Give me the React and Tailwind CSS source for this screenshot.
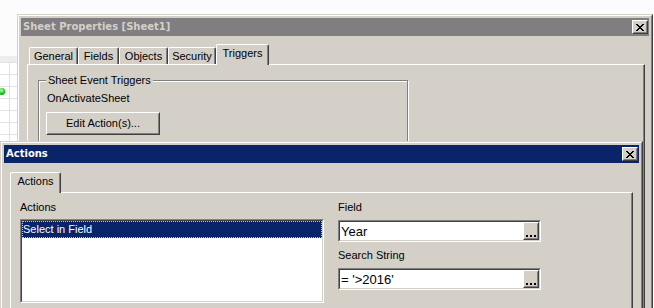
import React from 'react';

const SHEET_TABS = [
  { label: 'General', w: 'w-[49px]' },
  { label: 'Fields', w: 'w-[41px]' },
  { label: 'Objects', w: 'w-[49px]' },
  { label: 'Security', w: 'w-[48px]' },
];

// classic 8x7 close glyph
const CloseGlyph = () => {
  const rows = ['11000011', '01100110', '00111100', '00011000', '00111100', '01100110', '11000011'];
  return (
    <svg width="8" height="7" viewBox="0 0 8 7" shapeRendering="crispEdges">
      {rows.map((row, y) =>
        row.split('').map((c, x) => (c === '1' ? <rect key={`${x}-${y}`} x={x} y={y} width="1" height="1" fill="#000" /> : null))
      )}
    </svg>
  );
};

const Raised = ({ className = '', innerClassName = '', children }) => (
  <div className={`border border-t-white border-l-white border-r-[#404040] border-b-[#404040] ${className}`}>
    <div className={`h-full w-full border border-t-[#d4d0c8] border-l-[#d4d0c8] border-r-[#808080] border-b-[#808080] bg-[#d4d0c8] ${innerClassName}`}>
      {children}
    </div>
  </div>
);

const Sunken = ({ className = '', innerClassName = '', children }) => (
  <div className={`border border-t-[#808080] border-l-[#808080] border-r-white border-b-white ${className}`}>
    <div className={`h-full w-full border border-t-[#404040] border-l-[#404040] border-r-[#d4d0c8] border-b-[#d4d0c8] bg-white ${innerClassName}`}>
      {children}
    </div>
  </div>
);

const CloseButton = () => (
  <Raised className="h-[14px] w-[16px]" innerClassName="flex items-center justify-center">
    <CloseGlyph />
  </Raised>
);

const Frame = ({ className = '', title, active, children }) => (
  <div className={`absolute border border-t-[#d4d0c8] border-l-[#d4d0c8] border-r-[#404040] border-b-[#404040] bg-[#d4d0c8] ${className}`}>
    <div className="h-full w-full border border-t-white border-l-white border-r-[#808080] border-b-[#808080] p-[2px]">
      <div
        className={`flex h-[18px] items-center justify-between pl-[2px] pr-[1px] ${active ? 'bg-[#0a246a]' : 'bg-[#807e80]'}`}
      >
        <span
          className={`font-['DejaVu_Sans',sans-serif] text-[10px] font-bold leading-[12px] ${active ? 'text-white' : 'text-[#d4d0c8]'}`}
        >
          {title}
        </span>
        <CloseButton />
      </div>
      {children}
    </div>
  </div>
);

const Tab = ({ label, w, selected }) => (
  <div
    className={`flex items-center justify-center rounded-tl-[2px] rounded-tr-[2px] border-l border-t border-r border-l-white border-t-white border-r-[#404040] shadow-[inset_-1px_0_0_#808080] bg-[#d4d0c8] ${w} ${
      selected ? 'relative z-10 -mb-px h-[21px] pb-[3px]' : 'h-[17px] pt-[1px]'
    }`}
  >
    {label}
  </div>
);

const Panel = ({ className = '', children }) => (
  <div
    className={`border-l border-t border-r border-l-white border-t-white border-r-[#404040] shadow-[inset_-1px_0_0_#808080] bg-[#d4d0c8] ${className}`}
  >
    {children}
  </div>
);

const DotsButton = () => (
  <Raised className="h-[18px] w-[16px]" innerClassName="flex items-end justify-center pb-[1px]">
    <svg width="10" height="2" viewBox="0 0 10 2" shapeRendering="crispEdges">
      <rect x="0" y="0" width="2" height="2" fill="#000" />
      <rect x="4" y="0" width="2" height="2" fill="#000" />
      <rect x="8" y="0" width="2" height="2" fill="#000" />
    </svg>
  </Raised>
);

const TextBox = ({ value }) => (
  <Sunken className="h-[22px] w-[203px]" innerClassName="flex items-center justify-between">
    <span className="pl-[1px] text-[13px] leading-[15px]">{value}</span>
    <DotsButton />
  </Sunken>
);

const Desktop = () => (
  <div className="absolute left-0 top-[56px] h-[252px] w-[17px] bg-white">
    <div className="h-[6px] bg-[#eeedee]" />
    <div className="h-full bg-[linear-gradient(to_right,#e2e2e2_1px,transparent_1px),linear-gradient(to_bottom,#e2e2e2_1px,transparent_1px)] bg-[size:12px_12px] bg-[position:9px_12px]" />
    <div className="absolute left-[-1px] top-[32px] h-[7px] w-[6px] rounded-full bg-[radial-gradient(circle_at_40%_35%,#b8ffb0,#22c022_55%,#0a8a0a)]" />
  </div>
);

export default function App() {
  return (
    <div className="relative h-[308px] w-[654px] overflow-hidden bg-[#fdfcfd] font-['Liberation_Sans',Arial,sans-serif] text-[11px] leading-[13px] text-black">
      <Desktop />

      <Frame className="left-[17px] top-[14px] h-[330px] w-[636px]" title="Sheet Properties [Sheet1]">
        <div className="mt-[8px] flex h-[20px] items-end pl-[8px]">
          {SHEET_TABS.map((t) => (
            <Tab key={t.label} label={t.label} w={t.w} />
          ))}
          <Tab label="Triggers" w="w-[53px]" selected />
        </div>
        <Panel className="ml-[6px] mr-[4px] h-[300px]">
          <div className="relative ml-[10px] mt-[15px] h-[90px] w-[370px] border border-[#808080] pl-[7px] pt-[11px] shadow-[inset_1px_1px_0_#fff,1px_1px_0_#fff]">
            <span className="absolute left-[7px] top-[-7px] bg-[#d4d0c8] px-[2px]">Sheet Event Triggers</span>
            <div className="pl-[1px]">OnActivateSheet</div>
            <Raised className="mt-[7px] h-[23px] w-[114px]" innerClassName="flex items-center justify-center">
              Edit Action(s)...
            </Raised>
          </div>
        </Panel>
      </Frame>

      <Frame className="left-0 top-[141px] h-[200px] w-[643px]" title="Actions" active>
        <div className="mt-[9px] flex h-[20px] items-end pl-[6px]">
          <Tab label="Actions" w="w-[51px]" selected />
        </div>
        <Panel className="ml-[6px] mr-[6px] h-[160px]">
          <div className="flex pl-[9px]">
            <div className="flex flex-col">
              <div className="mt-[8px]">Actions</div>
              <Sunken className="mt-[5px] h-[84px] w-[304px]">
                <div className="flex h-[17px] items-center bg-[#0a246a] pl-[1px] text-white outline outline-1 -outline-offset-1 outline-dotted outline-[#e8c26a]">
                  Select in Field
                </div>
              </Sunken>
            </div>
            <div className="ml-[14px] flex flex-col">
              <div className="mt-[8px]">Field</div>
              <div className="mt-[6px]">
                <TextBox value="Year" />
              </div>
              <div className="mt-[7px]">Search String</div>
              <div className="mt-[6px]">
                <TextBox value="= '>2016'" />
              </div>
            </div>
          </div>
        </Panel>
      </Frame>
    </div>
  );
}
